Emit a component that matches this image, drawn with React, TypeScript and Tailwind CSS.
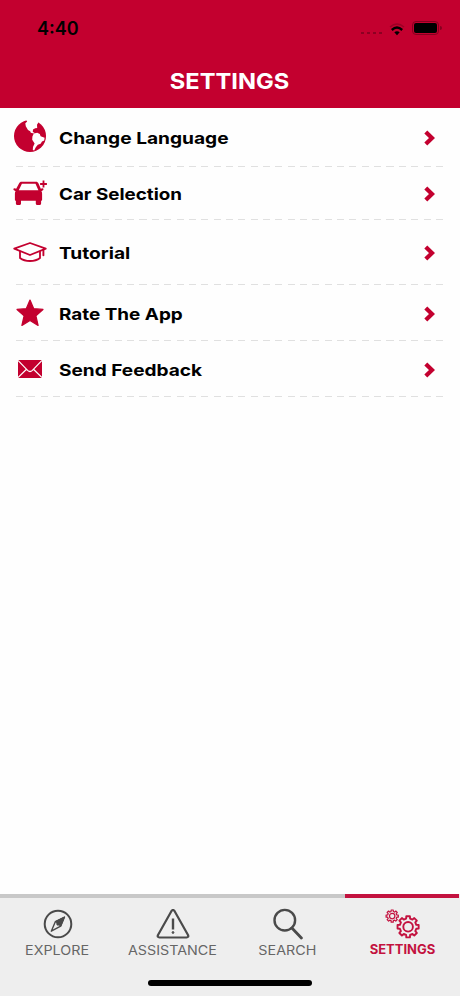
import React from 'react';

const GlobeIcon = () => (
  <svg className="w-[34px] h-[34px] mb-[2px]" viewBox="0 0 34 34">
    <circle cx="17" cy="17" r="16" fill="#c3002f" />
    <path
      fill="#fefefe"
      d="M12.500 0L14.200 2.500l-1.900 1.700.5 3 2.200 3.800 2.200 1.200.6 1.600 3.200.8.400-.8-1.600-.9.200-2.300 2.200-1.400 2-.2-.2-3.200 1.400-2.200L25 0z"
    />
    <path
      fill="#fefefe"
      d="M20.800 14.600l3.400-.8 2.600 1.200.8 2.200 4 1.600-.4 2.600-2.200 1.200-1.400 2.200-2.800 1-2 2.400-1.600 3.200-1.400-.4.200-3 1.600-3.600-2.400-3.600.200-3.200z"
    />
  </svg>
);

const CarIcon = () => (
  <svg className="w-[36px] h-[26px] shrink-0" viewBox="0 0 36 26">
    <path
      fill="#c3002f"
      fillRule="evenodd"
      d="M9.600 1.800h14.400c1.200 0 2 .5 2.500 1.600l2.300 5.400 1.600-.6c.9-.1 1.300.8.900 1.700l-1.900 1.400c.5.6.7 1.400.7 2.400v6c0 .7-.4 1-1 1v2.800c0 .9-.6 1.500-1.500 1.500h-2.300c-.9 0-1.500-.6-1.500-1.500v-2.800H9v2.800c0 .9-.6 1.500-1.500 1.500H5.400c-.9 0-1.500-.6-1.500-1.500v-2.800c-.6 0-1-.3-1-1v-6c0-1 .2-1.800.7-2.400L1.600 9.900c-.5-.9 0-1.800.9-1.700l1.700.6L7 3.400c.5-1.100 1.400-1.600 2.600-1.600zm.3 2L6.800 10.300h19.600l-2.900-6.500z"
    />
    <path d="M31.500.6v6.800M28.100 4h6.800" stroke="#c3002f" strokeWidth="1.800" />
  </svg>
);

const CapIcon = () => (
  <svg
    className="w-[34px] h-[20px]"
    viewBox="0 0 34 20"
    fill="none"
    stroke="#c3002f"
    strokeWidth="1.8"
    strokeLinejoin="round"
    strokeLinecap="round"
  >
    <path d="M17 1l15.800 5.700L17 13 1.200 6.700z" />
    <path d="M7 9.600V16c2.600 2 6 3 10 3s7.400-1 10-3V9.600" />
    <path d="M30.400 7.800v5.500" strokeWidth="1.9" />
  </svg>
);

const StarIcon = () => (
  <svg className="w-[28px] h-[28px]" viewBox="0 0 27 27">
    <path
      fill="#c3002f"
      stroke="#c3002f"
      strokeWidth="1.2"
      strokeLinejoin="round"
      d="M13.500 1l3.600 8.300 8.900.8-6.800 6.200 2.100 9.100-7.800-4.600-7.800 4.600 2.100-9.100L1 10.100l8.900-.8z"
    />
  </svg>
);

const MailIcon = () => (
  <svg className="w-[24px] h-[18px]" viewBox="0 0 24 18">
    <rect width="24" height="18" fill="#c3002f" />
    <path
      d="M0 .5L9.600 10.400Q12 12.600 14.400 10.400L24 .5M0 17.500L8.500 9.200M24 17.500L15.500 9.200"
      stroke="#fefefe"
      strokeWidth="1.2"
      fill="none"
    />
  </svg>
);

const ChevronIcon = () => (
  <svg className="w-[11px] h-[16px] mt-[2px]" viewBox="0 0 11 16">
    <path d="M1.800 1.900L8 8l-6.200 6.100" stroke="#c3002f" strokeWidth="4.2" fill="none" />
  </svg>
);

const CompassIcon = () => (
  <svg className="w-[30px] h-[30px]" viewBox="0 0 30 30" fill="none" stroke="#4a4a4a">
    <circle cx="15" cy="15" r="13.300" strokeWidth="2" />
    <path d="M21.500 8l-3.800 9.200-9.400 5 4-9.500z" strokeWidth="1.4" strokeLinejoin="round" />
    <path d="M21.500 8l-3.800 9.200-2.800-2.200-2.600-2.300z" fill="#4a4a4a" />
    <circle cx="15" cy="15" r="1.2" fill="#4a4a4a" />
  </svg>
);

const WarningIcon = () => (
  <svg className="w-[34px] h-[30px]" viewBox="0 0 34 30" fill="none" stroke="#4a4a4a">
    <path
      d="M15.500 2Q17 0 18.500 2L32 26Q33 28.300 30.500 28.500H3.500Q1 28.300 2 26z"
      strokeWidth="2.2"
      strokeLinejoin="round"
    />
    <path d="M17 9.500v11" strokeWidth="2.4" />
    <circle cx="17" cy="23.500" r=".9" fill="#4a4a4a" />
  </svg>
);

const SearchIcon = () => (
  <svg className="w-[30px] h-[32px]" viewBox="0 0 30 32" fill="none" stroke="#4a4a4a">
    <circle cx="11.800" cy="12.200" r="10.300" strokeWidth="2.4" />
    <path d="M18.900 20l9.500 10" strokeWidth="2.8" strokeLinecap="round" />
  </svg>
);

// Closed outline of a cog with eight teeth
const gearPath = (cx: number, cy: number, outer: number, inner: number) => {
  const points: string[] = [];
  for (let i = 0; i < 8; i++) {
    const mid = (i * Math.PI) / 4;
    [
      [-0.24, inner],
      [-0.17, outer],
      [0.17, outer],
      [0.24, inner],
    ].forEach(([offset, r]) => {
      const a = mid + offset;
      points.push(`${(cx + r * Math.cos(a)).toFixed(2)} ${(cy + r * Math.sin(a)).toFixed(2)}`);
    });
  }
  return `M${points.join('L')}Z`;
};

const GearsIcon = () => (
  <svg
    className="w-[35px] h-[30px] mr-px"
    viewBox="0 0 35 30"
    fill="none"
    stroke="#c3123f"
    strokeLinejoin="round"
  >
    <path d={gearPath(7.2, 7.1, 6.2, 4.7)} strokeWidth="1.2" />
    <circle cx="7.200" cy="7.100" r="2.7" strokeWidth="1.2" />
    <path d={gearPath(23.1, 17.8, 10.7, 8.4)} strokeWidth="1.9" />
    <circle cx="23.100" cy="17.800" r="4.8" strokeWidth="1.9" />
  </svg>
);

const rows = [
  {
    label: 'Change Language',
    icon: <GlobeIcon />,
    height: 'h-[59px]',
    text: 'pt-[2px]',
    stretch: 'scale-x-[1.16]',
  },
  {
    label: 'Car Selection',
    icon: <CarIcon />,
    height: 'h-[53px]',
    text: 'pt-[3px]',
    stretch: 'scale-x-[1.14]',
  },
  {
    label: 'Tutorial',
    icon: <CapIcon />,
    height: 'h-[65px]',
    text: 'pt-[3px]',
    stretch: 'scale-x-[1.16]',
  },
  {
    label: 'Rate The App',
    icon: <StarIcon />,
    height: 'h-[56px]',
    text: 'pt-[4px]',
    stretch: 'scale-x-[1.145]',
  },
  {
    label: 'Send Feedback',
    icon: <MailIcon />,
    height: 'h-[56px]',
    text: 'pt-[3px]',
    stretch: 'scale-x-[1.155]',
  },
];

const tabs = [
  { label: 'EXPLORE', icon: <CompassIcon /> },
  { label: 'ASSISTANCE', icon: <WarningIcon /> },
  { label: 'SEARCH', icon: <SearchIcon /> },
  { label: 'SETTINGS', icon: <GearsIcon />, active: true },
];

const StatusBar = () => (
  <div className="h-[56px] flex items-center justify-between pl-[37px] pr-[18px] text-black">
    <span className="pt-[2px] text-[18px] font-semibold leading-none">4:40</span>
    <div className="flex items-center">
      <div className="flex gap-[3px] mt-[9px] mr-[7px]">
        <span className="w-[3px] h-[2px] bg-[#8c0022]" />
        <span className="w-[3px] h-[2px] bg-[#8c0022]" />
        <span className="w-[3px] h-[2px] bg-[#8c0022]" />
        <span className="w-[3px] h-[2px] bg-[#8c0022]" />
      </div>
      <svg className="w-[16px] h-[13px] mr-[7px] mt-[2px]" viewBox="0 0 16 13" fill="none">
        <path d="M1 4Q8-2 15 4" stroke="#9c0026" strokeWidth="1.5" />
        <path d="M2.800 7Q8 2.200 13.200 7" stroke="#000" strokeWidth="2.4" />
        <path d="M5.300 9.300Q8 7 10.700 9.300L8 12.200z" fill="#000" />
      </svg>
      <div className="w-[27px] h-[14px] rounded-[4px] border border-[#85001f] p-px">
        <div className="h-full rounded-[2px] bg-black" />
      </div>
      <span className="ml-px w-[2px] h-[4px] rounded-r bg-[#85001f]" />
    </div>
  </div>
);

const App: React.FC = () => {
  return (
    <div className="w-[460px] h-[996px] flex flex-col bg-[#fefefe] font-['Inter',sans-serif] overflow-hidden">
      <header className="h-[108px] bg-[#c3002f]">
        <StatusBar />
        <h1 className="pt-[13px] pr-px text-center text-[22px] leading-[24px] font-bold text-white">
          <span className="inline-block scale-x-[1.075]">SETTINGS</span>
        </h1>
      </header>

      <main className="flex-1">
        {rows.map((row) => (
          <div key={row.label} className={`${row.height} flex flex-col`}>
            <button className="flex-1 flex items-center pl-[13px] pr-[25px] text-left">
              <span className="w-[34px] mr-[12px] flex justify-center shrink-0">{row.icon}</span>
              <span
                className={`flex-1 text-[16.5px] leading-[17px] font-bold text-black ${row.text}`}
              >
                <span className={`inline-block origin-left ${row.stretch}`}>{row.label}</span>
              </span>
              <ChevronIcon />
            </button>
            <div className="h-px ml-[16px] mr-[16px] bg-[repeating-linear-gradient(90deg,#e0e0e0_0_7px,transparent_7px_12.35px)]" />
          </div>
        ))}
      </main>

      <nav className="h-[102px] bg-[#eeeeee] flex flex-col items-center">
        <div className="w-full flex-1 flex">
          {tabs.map((tab) => (
            <button key={tab.label} className="w-[115px] flex flex-col items-center">
              <span
                className={`h-[4px] self-start ${
                  tab.active ? 'w-[114px] bg-[#c3123f]' : 'w-full bg-[#c8c8c8]'
                }`}
              />
              <span className="h-[44px] flex items-center pt-[8px]">{tab.icon}</span>
              <span
                className={`text-[13px] whitespace-nowrap ${
                  tab.active
                    ? 'leading-[14px] font-bold text-[#c3123f]'
                    : 'leading-[17px] scale-x-[1.1] text-[#666666]'
                }`}
              >
                {tab.label}
              </span>
            </button>
          ))}
        </div>
        <div className="w-[164px] h-[6px] mb-[10px] rounded-full bg-black" />
      </nav>
    </div>
  );
};

export default App;
